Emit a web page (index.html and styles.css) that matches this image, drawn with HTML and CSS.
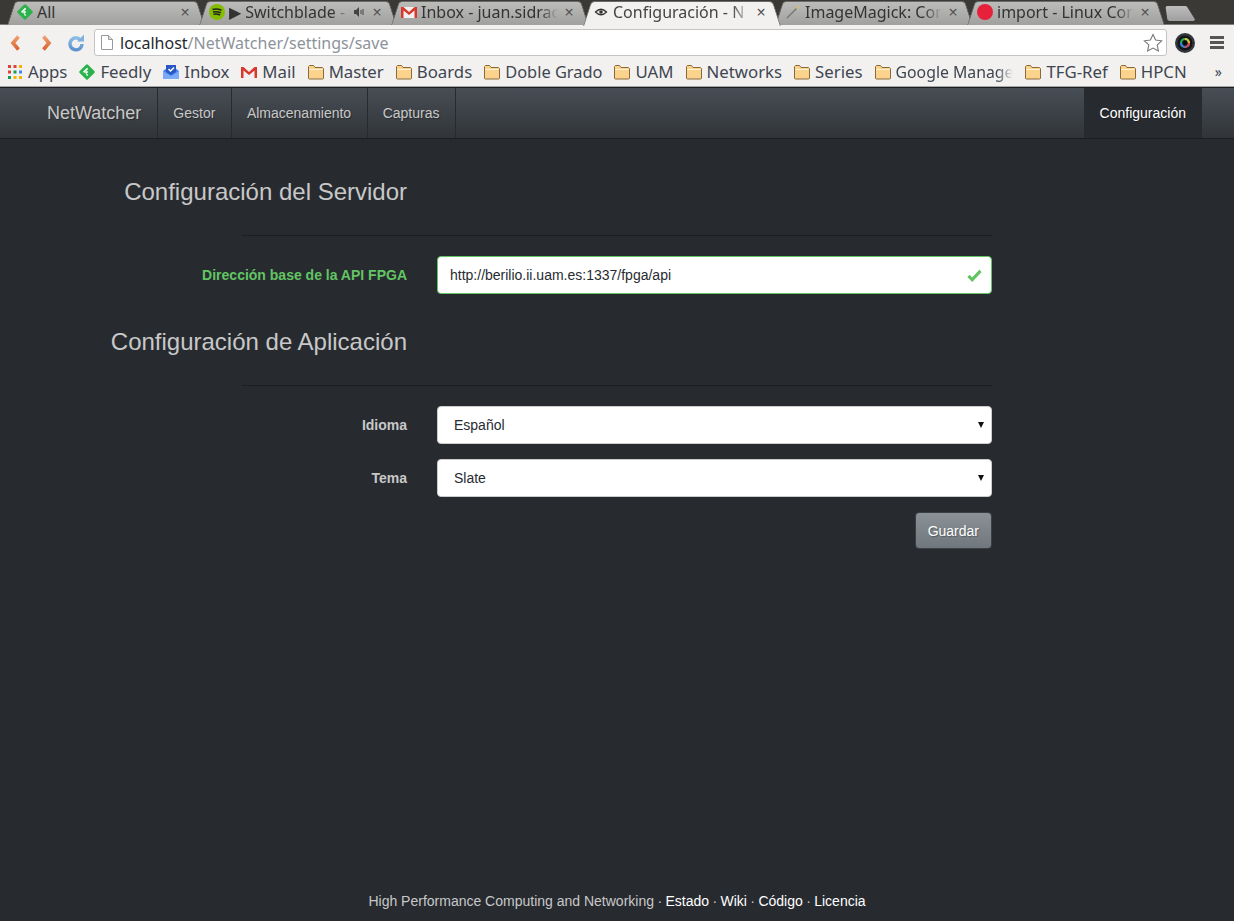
FILE: index.html
```html
<!DOCTYPE html>
<html lang="es">
<head>
    <meta charset="UTF-8">
    <title>Configuración - NetWatcher</title>
    <link rel="stylesheet" href="styles.css">
</head>
<body>
    <svg class="defs" width="0" height="0">
        <defs>
            <linearGradient id="orange" x1="0" y1="0" x2="0" y2="1">
                <stop offset="0" stop-color="#f0a070"/>
                <stop offset="1" stop-color="#d9622c"/>
            </linearGradient>
            <linearGradient id="blue" x1="0" y1="0" x2="0" y2="1">
                <stop offset="0" stop-color="#8dbbe6"/>
                <stop offset="1" stop-color="#5b93cf"/>
            </linearGradient>
            <g id="folder"><path d="M.5 13.500v-12l1-1h4l1.500 2h7.500l1 1v10l-1 .5h-13z" fill="#fbd38d" stroke="#8a6a3a"/><path d="M1.500 4.500h13" stroke="#fff3d6"/></g>
            <g id="feedly"><path d="M7 .7a1.400 1.400 0 0 1 2 0l6.300 6.300a1.400 1.400 0 0 1 0 2L9 15.300a1.400 1.400 0 0 1-2 0L.7 9a1.400 1.400 0 0 1 0-2z" fill="#2bb24c"/><path d="M4.600 8.400l4-4M6.600 9.400l2-2M7.600 11.400l1-1" stroke="#fff" stroke-width="1.700" fill="none"/></g>
            <g id="gmail"><path d="M0 3h16v11H0z" fill="#f1f1f1"/><path d="M0 3h2.500L8 8l5.500-5H16v11h-2.500V6.500L8 11 2.500 6.500V14H0z" fill="#d9382c"/></g>
        </defs>
    </svg>

    <div class="browser">
        <div class="tabstrip">
            <div class="tab">
                <svg class="fav" viewBox="0 0 16 16"><use href="#feedly"/></svg>
                <span class="tab-title">All</span><span class="tab-x">×</span>
            </div>
            <div class="tab">
                <svg class="fav" viewBox="0 0 16 16"><circle cx="8" cy="8" r="8" fill="#84bd00"/><path d="M3.500 5.500q4.500-1.200 9 .8M4 8q4-1 7.800.8M4.500 10.300q3.500-.8 6.500.7" stroke="#222" stroke-width="1.500" fill="none"/></svg>
                <span class="tab-title">▶ Switchblade -</span>
                <svg class="speaker" viewBox="0 0 12 10"><path d="M0 3h2l3-3v10L2 7H0z" fill="#444"/><path d="M7 3v4M9 2v6" stroke="#444"/></svg>
                <span class="tab-x">×</span>
            </div>
            <div class="tab">
                <svg class="fav" viewBox="0 0 16 16"><use href="#gmail"/></svg>
                <span class="tab-title">Inbox - juan.sidrac</span><span class="tab-x">×</span>
            </div>
            <div class="tab tab-active">
                <svg class="fav" viewBox="0 0 16 16"><path d="M2.500 8q5.500-5.500 11 0-5.500 5.500-11 0z" fill="none" stroke="#333" stroke-width="1.300"/><circle cx="8" cy="8" r="1.800" fill="#333"/></svg>
                <span class="tab-title">Configuración - N</span><span class="tab-x">×</span>
            </div>
            <div class="tab">
                <svg class="fav" viewBox="0 0 16 16"><path d="M2 14L11.500 4.500" stroke="#777" stroke-width="1.500"/><path d="M11.500 4.500l2-2" stroke="#e8c04a" stroke-width="1.500"/></svg>
                <span class="tab-title">ImageMagick: Cor</span><span class="tab-x">×</span>
            </div>
            <div class="tab">
                <svg class="fav" viewBox="0 0 16 16"><circle cx="8" cy="8" r="8" fill="#e8213b"/></svg>
                <span class="tab-title">import - Linux Cor</span><span class="tab-x">×</span>
            </div>
            <div class="new-tab"></div>
        </div>

        <div class="toolbar">
            <svg class="tool" viewBox="0 0 18 18"><path d="M11.500 2.500L6 9l5.500 6.500" fill="none" stroke="url(#orange)" stroke-width="3.600"/></svg>
            <svg class="tool" viewBox="0 0 18 18"><path d="M6.500 2.500L12 9l-5.500 6.500" fill="none" stroke="url(#orange)" stroke-width="3.600"/></svg>
            <svg class="tool tool-last" viewBox="0 0 18 18"><path d="M14 6.500A6 6 0 1 0 15 10" fill="none" stroke="url(#blue)" stroke-width="3.400"/><path d="M10 7.500h7V.500z" fill="#7fb0e2"/></svg>
            <div class="omnibox">
                <svg class="page-icon" viewBox="0 0 12 15"><path d="M.5.500h7l4 4v10H.500z" fill="#fff" stroke="#999"/><path d="M7.500.500v4h4" fill="#ddd" stroke="#999"/></svg>
                <span class="url"><b>localhost</b>/NetWatcher/settings/save</span>
                <svg class="star" viewBox="0 0 20 20"><path d="M10 1.500l2.600 5.600 6 .7-4.400 4.100 1.200 6L10 15l-5.400 2.900 1.200-6L1.400 7.800l6-.7z" fill="#fff" stroke="#777" stroke-width="1.100"/></svg>
            </div>
            <svg class="ext" viewBox="0 0 20 20"><circle cx="10" cy="10" r="10" fill="#33363c"/><circle cx="10" cy="10" r="7.500" fill="#15161a"/><circle cx="10" cy="10" r="4" fill="none" stroke="#25b05a" stroke-width="2.200"/><path d="M10 6a4 4 0 0 1 4 4" fill="none" stroke="#e8c030" stroke-width="2.200"/><path d="M14 10a4 4 0 0 1-4 4" fill="none" stroke="#e04060" stroke-width="2.200"/><path d="M10 14a4 4 0 0 1-4-4" fill="none" stroke="#3a7ae0" stroke-width="2.200"/><circle cx="10" cy="10" r="2" fill="#0c0c0e"/></svg>
            <div class="menu-btn"><i></i><i></i><i></i></div>
        </div>

        <div class="bookmarks">
            <div class="bm">
                <svg class="bm-icon" viewBox="0 0 16 16"><g transform="translate(1 1)"><rect width="3" height="3" fill="#db4437"/><rect x="5.500" width="3" height="3" fill="#db4437"/><rect x="11" width="3" height="3" fill="#f4b400"/><rect y="5.500" width="3" height="3" fill="#db4437"/><rect x="5.500" y="5.500" width="3" height="3" fill="#0f9d58"/><rect x="11" y="5.500" width="3" height="3" fill="#4285f4"/><rect y="11" width="3" height="3" fill="#0f9d58"/><rect x="5.500" y="11" width="3" height="3" fill="#f4b400"/><rect x="11" y="11" width="3" height="3" fill="#f4b400"/></g></svg>
                <span>Apps</span>
            </div>
            <div class="bm"><svg class="bm-icon" viewBox="0 0 16 16"><use href="#feedly"/></svg><span>Feedly</span></div>
            <div class="bm">
                <svg class="bm-icon" viewBox="0 0 16 16"><path d="M0 7l4-3h8l4 3v8H0z" fill="#4285f4"/><path d="M3 1h10v7L8 11 3 8z" fill="#2a56c6"/><path d="M5.500 5l2 2 3.500-3.500" fill="none" stroke="#fff" stroke-width="1.500"/><path d="M0 7l8 5 8-5v8H0z" fill="#7baaf7"/></svg>
                <span>Inbox</span>
            </div>
            <div class="bm"><svg class="bm-icon" viewBox="0 0 16 16"><use href="#gmail"/></svg><span>Mail</span></div>
            <div class="bm"><svg class="bm-icon" viewBox="0 0 16 14"><use href="#folder"/></svg><span>Master</span></div>
            <div class="bm"><svg class="bm-icon" viewBox="0 0 16 14"><use href="#folder"/></svg><span>Boards</span></div>
            <div class="bm"><svg class="bm-icon" viewBox="0 0 16 14"><use href="#folder"/></svg><span class="bm-tight">Doble Grado</span></div>
            <div class="bm"><svg class="bm-icon" viewBox="0 0 16 14"><use href="#folder"/></svg><span>UAM</span></div>
            <div class="bm"><svg class="bm-icon" viewBox="0 0 16 14"><use href="#folder"/></svg><span>Networks</span></div>
            <div class="bm"><svg class="bm-icon" viewBox="0 0 16 14"><use href="#folder"/></svg><span>Series</span></div>
            <div class="bm"><svg class="bm-icon" viewBox="0 0 16 14"><use href="#folder"/></svg><span class="bm-cut">Google Manage</span></div>
            <div class="bm"><svg class="bm-icon" viewBox="0 0 16 14"><use href="#folder"/></svg><span>TFG-Ref</span></div>
            <div class="bm"><svg class="bm-icon" viewBox="0 0 16 14"><use href="#folder"/></svg><span>HPCN</span></div>
            <span class="bm-more">»</span>
        </div>
    </div>

    <nav class="navbar">
        <a class="brand">NetWatcher</a>
        <a class="nav-link">Gestor</a>
        <a class="nav-link">Almacenamiento</a>
        <a class="nav-link">Capturas</a>
        <a class="nav-link nav-active">Configuración</a>
    </nav>

    <main class="content">
        <h3 class="section-title">Configuración del Servidor</h3>
        <hr class="rule">
        <div class="field field-ok">
            <label class="field-label">Dirección base de la API FPGA</label>
            <div class="field-box">
                <input class="control" type="text" value="http://berilio.ii.uam.es:1337/fpga/api">
                <svg class="ok-icon" viewBox="0 0 16 14"><path d="M1.500 7.500l4 4 9-9.500" fill="none" stroke="#62c462" stroke-width="3.400"/></svg>
            </div>
        </div>

        <h3 class="section-title second">Configuración de Aplicación</h3>
        <hr class="rule">
        <div class="field">
            <label class="field-label">Idioma</label>
            <div class="field-box select-box">
                <select class="control"><option>Español</option></select>
            </div>
        </div>
        <div class="field">
            <label class="field-label">Tema</label>
            <div class="field-box select-box">
                <select class="control"><option>Slate</option></select>
            </div>
        </div>
        <div class="actions">
            <button class="btn">Guardar</button>
        </div>
    </main>

    <footer class="footer">
        High Performance Computing and Networking <span class="sep">·</span> <a>Estado</a> <span class="sep">·</span> <a>Wiki</a> <span class="sep">·</span> <a>Código</a> <span class="sep">·</span> <a>Licencia</a>
    </footer>
</body>
</html>
```

FILE: styles.css
```css
* {
    box-sizing: border-box;
}

html, body {
    height: 100%;
    margin: 0;
}

body {
    display: flex;
    flex-direction: column;
    background: #272b30;
    color: #c8c8c8;
    font-family: "Liberation Sans", Arial, sans-serif;
    font-size: 14px;
    overflow: hidden;
}

.defs {
    position: absolute;
}

/* browser chrome */
.browser {
    flex: none;
    font-family: "Noto Sans", sans-serif;
    color: #3f4650;
}

.tabstrip {
    display: flex;
    height: 25px;
    padding: 1px 0 0 7px;
    background: #3b3935;
    border-bottom: 1px solid #7c7c7c;
}

.tab {
    position: relative;
    z-index: 0;
    display: flex;
    align-items: center;
    width: 198px;
    height: 24px;
    margin-right: -6px;
    padding: 0 13px 2px 10px;
    font-size: 16px;
    color: #333;
}

.tab::before,
.tab::after {
    content: "";
    position: absolute;
    z-index: -1;
    top: 0;
    bottom: 0;
    width: 55%;
    background: linear-gradient(#bcbcba, #a0a09e);
    border-top: 1px solid #6a6a68;
}

.tab::before {
    left: 0;
    border-left: 1px solid #6a6a68;
    border-radius: 4px 0 0 0;
    transform: skewX(-18deg);
    transform-origin: bottom left;
}

.tab::after {
    right: 0;
    border-right: 1px solid #6a6a68;
    border-radius: 0 4px 0 0;
    transform: skewX(18deg);
    transform-origin: bottom right;
}

.tab-active {
    z-index: 2;
    color: #444;
}

.tab-active::before,
.tab-active::after {
    bottom: -1px;
    background: #f2f1f0;
}

.fav {
    flex: none;
    width: 16px;
    height: 16px;
    margin-right: 4px;
}

.tab-title {
    flex: 1;
    min-width: 0;
    white-space: nowrap;
    -webkit-mask-image: linear-gradient(to left, transparent, #000 18px);
    mask-image: linear-gradient(to left, transparent, #000 18px);
}

.tab:first-child .tab-title {
    -webkit-mask-image: none;
    mask-image: none;
}

.speaker {
    flex: none;
    width: 12px;
    height: 10px;
    margin-left: 4px;
}

.tab-x {
    flex: none;
    width: 14px;
    margin-left: 4px;
    font-size: 16px;
    color: #555;
    text-align: center;
}

.new-tab {
    width: 30px;
    height: 15px;
    margin: 5px 0 0 6px;
    background: linear-gradient(#bdbdbd, #9f9f9f);
    clip-path: polygon(2% 8%, 6% 0, 70% 0, 74% 6%, 100% 90%, 96% 100%, 14% 100%, 8% 92%);
}

.toolbar {
    display: flex;
    align-items: center;
    height: 35px;
    padding: 0 10px 0 7px;
    background: #f2f1f0;
}

.tool {
    flex: none;
    width: 18px;
    height: 18px;
    margin-right: 12px;
}

.tool-last {
    margin-right: 9px;
}

.omnibox {
    flex: 1;
    display: flex;
    align-items: center;
    height: 27px;
    margin-right: 8px;
    padding: 0 3px 0 6px;
    background: #fff;
    border: 1px solid #c4c4c4;
    border-radius: 3px;
    font-size: 16px;
}

.page-icon {
    width: 12px;
    height: 15px;
    margin-right: 7px;
}

.url {
    flex: 1;
    color: #8d939b;
}

.url b {
    font-weight: 400;
    color: #26292e;
}

.star {
    width: 20px;
    height: 20px;
}

.ext {
    flex: none;
    width: 20px;
    height: 20px;
    margin-right: 15px;
}

.menu-btn {
    display: flex;
    flex-direction: column;
    gap: 2px;
    width: 14px;
}

.menu-btn i {
    height: 3px;
    background: #555;
}

.bookmarks {
    display: flex;
    align-items: center;
    height: 27px;
    padding: 0 0 3px 7px;
    background: #f2f1f0;
    border-bottom: 1px solid #a8a8a8;
    font-size: 16.8px;
}

.bm {
    flex: none;
    display: flex;
    align-items: center;
    gap: 5px;
    margin-right: 12px;
    white-space: nowrap;
}

.bm-icon {
    width: 16px;
    height: 16px;
}

.bm-tight {
    font-size: 16.4px;
}

.bm-cut {
    font-size: 15.8px;
    -webkit-mask-image: linear-gradient(to left, transparent, #000 16px);
    mask-image: linear-gradient(to left, transparent, #000 16px);
}

.bm-more {
    margin-left: auto;
    margin-right: 12px;
    font-size: 14px;
}

/* navbar */
.navbar {
    flex: none;
    display: flex;
    height: 52px;
    padding: 0 32px 0 31px;
    background: linear-gradient(#484e55, #3a3f44 60%, #313539);
    border-top: 1px solid #1c1e22;
    border-bottom: 1px solid #1c1e22;
    text-shadow: 1px 1px 1px rgba(0, 0, 0, 0.3);
}

.navbar a {
    display: flex;
    align-items: center;
    padding: 0 15.5px 0 15px;
    color: #c8c8c8;
    border-right: 1px solid #272b30;
}

.navbar .brand {
    padding: 0 16px;
    font-size: 18px;
}

.navbar .nav-active {
    margin-left: auto;
    padding: 0 15px 0 16px;
    background: #272b30;
    color: #fff;
}

/* form */
.content {
    flex: 1;
    width: 992px;
}

.section-title {
    margin: 39px 0 0;
    width: 407px;
    font-size: 24px;
    font-weight: 400;
    line-height: 27px;
    text-align: right;
    white-space: nowrap;
}

.section-title.second {
    margin-top: 34px;
}

.rule {
    margin: 30px 0 20px 242px;
    border: 0;
    border-top: 1px solid #1c1e22;
}

.field {
    display: grid;
    grid-template-columns: 407px 1fr;
    column-gap: 30px;
    align-items: center;
    margin-bottom: 15px;
}

.field-label {
    font-weight: 700;
    text-align: right;
}

.field-ok .field-label {
    color: #62c462;
}

.field-box {
    position: relative;
}

.control {
    display: block;
    width: 100%;
    height: 38px;
    padding: 8px 12px;
    background: #fff;
    border: 1px solid #ccc;
    border-radius: 4px;
    color: #272b30;
    font-family: inherit;
    font-size: 14px;
}

select.control {
    padding-left: 16px;
    -webkit-appearance: none;
    appearance: none;
}

.select-box::after {
    content: "";
    position: absolute;
    top: 16px;
    right: 8px;
    border-top: 6px solid #111;
    border-left: 3px solid transparent;
    border-right: 3px solid transparent;
}

.field-ok .control {
    border-color: #62c462;
}

.ok-icon {
    position: absolute;
    top: 13px;
    right: 10px;
    width: 15px;
    height: 13px;
}

.actions {
    display: flex;
    justify-content: flex-end;
}

.btn {
    height: 37px;
    padding: 0 12px;
    background: linear-gradient(#8a9196, #7a8288 60%, #70787d);
    border: 1px solid #3a3f44;
    border-radius: 4px;
    color: #fff;
    font-family: inherit;
    font-size: 14px;
    text-shadow: 1px 1px 1px rgba(0, 0, 0, 0.3);
}

.footer {
    flex: none;
    height: 41px;
    padding-top: 13px;
    text-align: center;
    color: #c8c8c8;
}

.footer a {
    color: #fff;
}

.sep {
    margin: 0 -0.5px;
}
```
